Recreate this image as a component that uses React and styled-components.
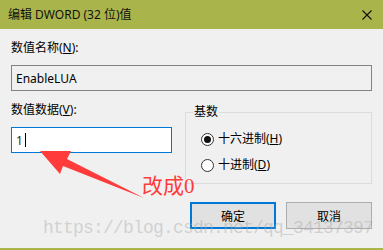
import React from "react";
import styled, { createGlobalStyle } from "styled-components";

const GlobalStyle = createGlobalStyle`
  body {
    margin: 0;
    background: #f0f0f0;
    overflow: hidden;
  }
`;

function DwordDialog() {
  return (
    <Dialog>
      <TitleBar>
        <Title>编辑 DWORD (32 位)值</Title>
        <CloseIcon viewBox="0 0 10 10">
          <path d="M0.5 0.5 L9.5 9.5 M9.5 0.5 L0.5 9.5" stroke="#111" strokeWidth="1.1" />
        </CloseIcon>
      </TitleBar>

      <Body>
        <Label top="11px">数值名称(<u>N</u>):</Label>
        <TextBox>EnableLUA</TextBox>

        <DataRow>
          <DataColumn>
            <Label top="11px">数值数据(<u>V</u>):</Label>
            <TextBox focused>
              1<Caret />
            </TextBox>
          </DataColumn>

          <BaseGroup>
            <Legend>基数</Legend>
            <RadioList>
              <RadioRow>
                <Radio checked />
                <span>十六进制(<u>H</u>)</span>
              </RadioRow>
              <RadioRow>
                <Radio />
                <span>十进制(<u>D</u>)</span>
              </RadioRow>
            </RadioList>
          </BaseGroup>
        </DataRow>

        <ButtonRow>
          <Button primary>确定</Button>
          <Button>取消</Button>
        </ButtonRow>
      </Body>

      <Arrow viewBox="0 0 383 250">
        <polygon
          points="40,151 71,151 67,159 144,198 63,166 60,174"
          fill="#ff3b3b"
        />
      </Arrow>
      <Note>改成0</Note>
      <Watermark>https://blog.csdn.net/qq_34137397</Watermark>
    </Dialog>
  );
}

export default function App() {
  return (
    <>
      <GlobalStyle />
      <DwordDialog />
    </>
  );
}

const Dialog = styled.div`
  position: relative;
  width: 383px;
  height: 250px;
  box-sizing: border-box;
  background: #f0f0f0;
  border-bottom: 2px solid #aab54c;
  font-family: "Noto Sans", "Noto Sans CJK SC", sans-serif;
  font-size: 12px;
  color: #000;
  display: flex;
  flex-direction: column;
  overflow: hidden;
`;

const TitleBar = styled.div`
  height: 29px;
  flex-shrink: 0;
  background: #a9b54b;
  display: flex;
  align-items: center;
  justify-content: space-between;
  padding: 0 11px 0 8px;
`;

const Title = styled.span`
  font-size: 12px;
  line-height: 16px;
  color: #111;
`;

const CloseIcon = styled.svg`
  width: 10px;
  height: 10px;
`;

const Body = styled.div`
  display: flex;
  flex-direction: column;
  padding: 0 11px;
`;

const Label = styled.div`
  margin-top: ${(props) => props.top || "0"};
  line-height: 16px;
  height: 16px;
`;

const TextBox = styled.div`
  margin-top: 9px;
  height: 26px;
  box-sizing: border-box;
  display: flex;
  align-items: center;
  padding-left: 4px;
  border: 1px solid ${(props) => (props.focused ? "#0078d7" : "#838383")};
  background: ${(props) => (props.focused ? "#ffffff" : "#f0f0f0")};
  color: ${(props) => (props.focused ? "#3a2a10" : "#000")};
`;

const Caret = styled.span`
  display: inline-block;
  width: 1px;
  height: 14px;
  margin-left: 2px;
  background: #000;
`;

const DataRow = styled.div`
  display: flex;
  gap: 13px;
`;

const DataColumn = styled.div`
  width: 161px;
  display: flex;
  flex-direction: column;
`;

const BaseGroup = styled.fieldset`
  margin: 13px 0 0;
  padding: 0;
  width: 187px;
  height: 80px;
  box-sizing: border-box;
  border: 1px solid #dcdcdc;
  min-inline-size: 0;
`;

const Legend = styled.legend`
  margin-left: 7px;
  padding: 0 1px;
  line-height: 16px;
`;

const RadioList = styled.div`
  display: flex;
  flex-direction: column;
  gap: 10px;
  padding: 11px 0 0 15px;
`;

const RadioRow = styled.div`
  display: flex;
  align-items: center;
  gap: 4px;
  height: 16px;
  line-height: 16px;
`;

const Radio = styled.span`
  width: 13px;
  height: 13px;
  box-sizing: border-box;
  border-radius: 50%;
  border: 1px solid #333;
  background: #fff;
  display: flex;
  align-items: center;
  justify-content: center;

  &::after {
    content: "";
    display: ${(props) => (props.checked ? "block" : "none")};
    width: 7px;
    height: 7px;
    border-radius: 50%;
    background: #111;
  }
`;

const ButtonRow = styled.div`
  display: flex;
  justify-content: flex-end;
  gap: 10px;
  margin-top: 18px;
`;

const Button = styled.button`
  width: 86px;
  height: 27px;
  box-sizing: border-box;
  padding: 0;
  font-family: inherit;
  font-size: 12px;
  color: #000;
  background: #e1e1e1;
  border: ${(props) => (props.primary ? "2px solid #0078d7" : "1px solid #adadad")};
`;

const Arrow = styled.svg`
  position: absolute;
  left: 0;
  top: 0;
  width: 383px;
  height: 250px;
  pointer-events: none;
`;

const Note = styled.div`
  position: absolute;
  left: 142px;
  top: 173px;
  font-family: "Liberation Serif", "Noto Sans CJK SC", serif;
  font-size: 21px;
  line-height: 26px;
  color: #ff3b3b;
  pointer-events: none;
`;

const Watermark = styled.div`
  position: absolute;
  left: 43px;
  top: 218px;
  font-family: "Liberation Mono", monospace;
  font-size: 18px;
  line-height: 20px;
  letter-spacing: -0.8px;
  color: rgba(170, 170, 170, 0.45);
  white-space: nowrap;
  pointer-events: none;
`;
